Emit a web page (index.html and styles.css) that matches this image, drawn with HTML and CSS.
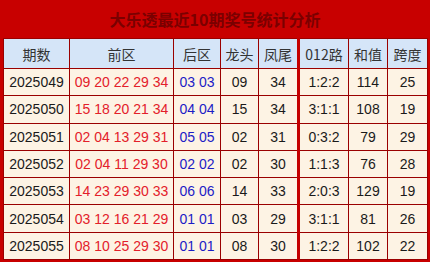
FILE: index.html
```html
<!DOCTYPE html>
<html lang="zh">
<head>
<meta charset="utf-8">
<link rel="stylesheet" href="styles.css">
</head>
<body>
<div class="panel">
  <div class="title">大乐透最近10期奖号统计分析</div>
  <table class="grid">
    <colgroup>
      <col class="c1"><col class="c2"><col class="c3"><col class="c4"><col class="c5"><col class="c6"><col class="c7"><col class="c8">
    </colgroup>
    <thead>
      <tr><th>期数</th><th>前区</th><th>后区</th><th>龙头</th><th>凤尾</th><th class="sep">012路</th><th>和值</th><th>跨度</th></tr>
    </thead>
    <tbody>
      <tr><td>2025049</td><td class="front">09 20 22 29 34</td><td class="back">03 03</td><td>09</td><td>34</td><td class="sep">1:2:2</td><td>114</td><td>25</td></tr>
      <tr><td>2025050</td><td class="front">15 18 20 21 34</td><td class="back">04 04</td><td>15</td><td>34</td><td class="sep">3:1:1</td><td>108</td><td>19</td></tr>
      <tr><td>2025051</td><td class="front">02 04 13 29 31</td><td class="back">05 05</td><td>02</td><td>31</td><td class="sep">0:3:2</td><td>79</td><td>29</td></tr>
      <tr><td>2025052</td><td class="front">02 04 11 29 30</td><td class="back">02 02</td><td>02</td><td>30</td><td class="sep">1:1:3</td><td>76</td><td>28</td></tr>
      <tr><td>2025053</td><td class="front">14 23 29 30 33</td><td class="back">06 06</td><td>14</td><td>33</td><td class="sep">2:0:3</td><td>129</td><td>19</td></tr>
      <tr><td>2025054</td><td class="front">03 12 16 21 29</td><td class="back">01 01</td><td>03</td><td>29</td><td class="sep">3:1:1</td><td>81</td><td>26</td></tr>
      <tr><td>2025055</td><td class="front">08 10 25 29 30</td><td class="back">01 01</td><td>08</td><td>30</td><td class="sep">1:2:2</td><td>102</td><td>22</td></tr>
    </tbody>
  </table>
</div>
</body>
</html>
```
FILE: styles.css
```css
html, body {
  margin: 0;
  padding: 0;
  background: #ffffff;
}
.panel {
  width: 430px;
  height: 262px;
  box-sizing: border-box;
  background: #c80000;
  padding: 0 3px 3px 3px;
  display: flex;
  flex-direction: column;
}
.title {
  height: 38px;
  line-height: 38px;
  text-align: center;
  font-family: "Noto Sans CJK SC", sans-serif;
  font-size: 16px;
  font-weight: bold;
  color: #7a0000;
}
.grid {
  width: 424px;
  table-layout: fixed;
  border-collapse: collapse;
  font-family: "Liberation Sans", "Noto Sans CJK SC", sans-serif;
  font-size: 14px;
  color: #1a1a1a;
}
.c1 { width: 66px; }
.c2 { width: 104px; }
.c3 { width: 47px; }
.c4 { width: 38px; }
.c5 { width: 40px; }
.c6 { width: 50px; }
.c7 { width: 39px; }
.c8 { width: 40px; }
.grid th, .grid td {
  border: 1px solid #9a0000;
  padding: 0;
  text-align: center;
  white-space: nowrap;
}
.grid th {
  height: 29px;
  background: #d5e5f8;
  font-family: "Noto Sans CJK SC", sans-serif;
  font-weight: normal;
  font-size: 14px;
  color: #333;
}
.grid td {
  height: 26.3px;
  background: #fdf3e4;
}
.grid .sep {
  border-left: 3px solid #c40000;
}
.grid td.front { color: #e3202a; }
.grid td.back { color: #1c1cc6; }
```
